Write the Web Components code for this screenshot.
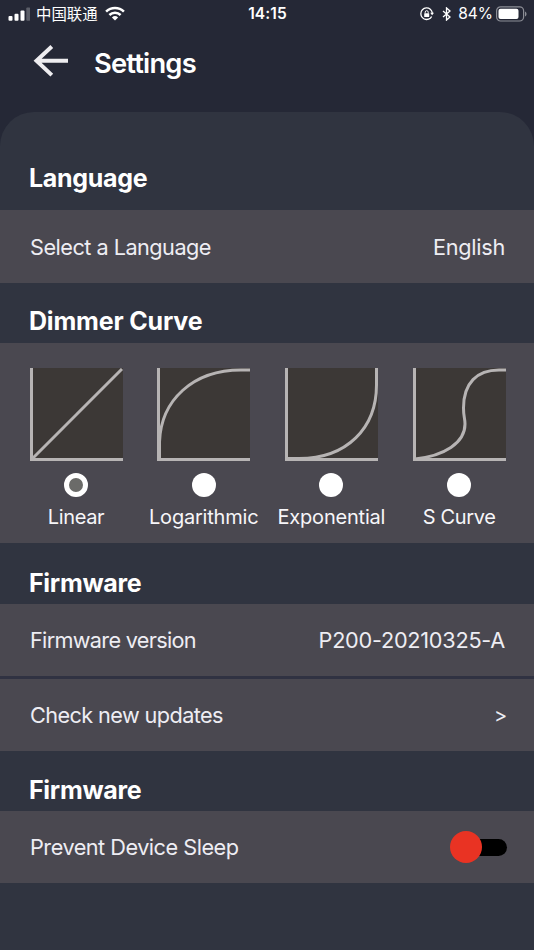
<!DOCTYPE html>
<html lang="en">
<head>
<meta charset="utf-8">
<title>Settings</title>
<style>
html,body{margin:0;height:100%;background:#252836;overflow:hidden}
body{font-family:Inter,"Noto Sans CJK SC",sans-serif;color:#fff}
</style>
</head>
<body>
<settings-app></settings-app>
<script>
function define(name, html) {
  const t = document.createElement('template');
  t.innerHTML = html;
  customElements.define(name, class extends HTMLElement {
    constructor() {
      super();
      this.attachShadow({mode: 'open'}).append(t.content.cloneNode(true));
    }
  });
}

define('status-bar', `
<style>
:host{display:grid;grid-template-columns:1fr auto 1fr;align-items:center;height:27px;box-sizing:border-box;padding:0 7px 0 8px;white-space:nowrap}
div{display:flex;align-items:center}
svg{display:block;flex:none}
.carrier{font:400 15.4px/27px "Noto Sans CJK SC",sans-serif;margin:0 7px 0 6px}
time{font-size:15.5px;font-weight:600;letter-spacing:.1px}
.right{justify-content:flex-end}
.pct{font-size:15.5px;letter-spacing:0;margin:0 3px 0 7px}
</style>
<div><svg width="22" height="16" viewBox="0 0 22 16" fill="#fff"><rect x=".5" y="10" width="4" height="4.8" rx="1"/><rect x="6.5" y="7.8" width="4" height="7" rx="1"/><rect x="12.5" y="4.5" width="4" height="10.3" rx="1"/><rect x="18.3" y="1.5" width="4" height="13.3" rx="1" opacity=".25"/></svg>
<span class="carrier">中国联通</span>
<svg width="20" height="15" viewBox="0 0 20 15" fill="none" stroke="#fff" stroke-width="2.5"><path d="M1.1 5.6a12.6 12.6 0 0 1 17.8 0M4.4 9a8 8 0 0 1 11.2 0"/><path d="M10 14.6l-3.1-3.1a4.5 4.5 0 0 1 6.2 0z" fill="#fff" stroke="none"/></svg></div>
<time>14:15</time>
<div class="right"><svg width="14" height="14" viewBox="0 0 14 14"><path d="M10.3 2.2A5.8 5.8 0 1 0 10.3 11.2M10.3 2.2A5.8 5.8 0 0 1 12.3 6M10.3 11.2A5.8 5.8 0 0 0 11.6 9.4" fill="none" stroke="#fff" stroke-width="1.3"/><path d="M10.2 5.7h3.8l-1.9 2.6z" fill="#fff"/><rect x="4.2" y="6.2" width="5" height="3.9" rx=".6" fill="#fff"/><path d="M5.2 6.4V5.2a1.5 1.5 0 0 1 3 0v1.2" fill="none" stroke="#fff"/></svg>
<svg style="margin-left:8px" width="9" height="14" viewBox="0 0 9 14"><path d="M1 4l7 6-3.5 3.1V.9L8 4l-7 6" fill="none" stroke="#fff" stroke-width="1.3"/></svg>
<span class="pct">84%</span>
<svg width="31" height="16" viewBox="0 0 31 16"><rect x=".6" y=".8" width="27" height="14.2" rx="4" fill="none" stroke="#8c8e96" stroke-width="1.2"/><rect x="2.5" y="2.7" width="20" height="10.4" rx="2" fill="#fff"/><path d="M29 5.5v5c2-.8 2-4.2 0-5z" fill="#8c8e96"/></svg></div>`);

define('app-header', `
<style>
:host{display:flex;height:85px;box-sizing:border-box;padding:16px 0 0 33px}
svg{display:block;margin-right:26px}
h1{margin:0;font-size:27.3px;line-height:42px;font-weight:600;letter-spacing:-.8px}
</style>
<svg width="35" height="36" viewBox="0 0 35 36" fill="none" stroke="#eeedf0" stroke-width="4"><path d="M18.8 3.5L3.5 17.8l15.3 14.3M3.5 17.8H35"/></svg>
<h1><slot></slot></h1>`);

define('settings-panel', `
<style>:host{display:block;flex:1;background:#303440;border-radius:34px 34px 0 0;overflow:hidden}</style>
<slot></slot>`);

define('settings-section', `
<style>
:host{display:block}
h2{margin:0;height:var(--head,60px);box-sizing:border-box;padding:var(--pad,22px) 29px 0;font-size:25px;line-height:32px;font-weight:700;letter-spacing:var(--title-ls,-.3px);white-space:nowrap}
div{display:grid;gap:3px;background:#303242}
</style>
<h2><slot name="title"></slot></h2><div><slot></slot></div>`);

define('settings-row', `
<style>
:host{display:flex;justify-content:space-between;align-items:center;height:var(--h,72px);box-sizing:border-box;padding:0 29px 0 30px;background:#4a4850;color:#eeedf3;font-size:21.7px;font-weight:400;letter-spacing:var(--ls,-.5px);white-space:nowrap}
.v{letter-spacing:-.26px;display:flex}
</style>
<span><slot></slot></span><span class="v"><slot name="value"></slot></span>`);

define('curve-picker', `
<style>:host{display:grid;grid-template-columns:repeat(4,127.7px);height:200px;box-sizing:border-box;padding:25px 0 0 12.2px;background:#4a4850}</style>
<slot></slot>`);

const curves = {
  linear: 'M2 91L92 1',
  log: 'M2.5 91V74C4 32 36 2 84 2H93',
  exp: 'M2 90.5H14C62 90.5 91.5 60 91.5 17V0',
  s: 'M2 91C31 88 52 75 52 56C52 50 50.5 49 50.5 40C50.5 15 64 2 86 2H93'
};
customElements.define('curve-option', class extends HTMLElement {
  constructor() {
    super();
    this.attachShadow({mode: 'open'});
  }
  connectedCallback() {
    this.shadowRoot.innerHTML = `
<style>
:host{display:flex;flex-direction:column;align-items:center;font-size:20px;line-height:24px;letter-spacing:var(--ls,-.2px);white-space:nowrap;color:#f7f6f9}
svg{display:block}
i{width:24px;height:24px;margin:12px 0 8px;border-radius:50%;background:#fff;box-sizing:border-box}
:host([checked]) i{background:#6b6b69;border:5.5px solid #fff}
</style>
<svg width="93" height="93" viewBox="0 0 93 93"><rect width="93" height="93" fill="#3c3836"/><g fill="none" stroke="#b7b4b4" stroke-width="3"><path d="M1.5 0V91.5H93"/><path d="${curves[this.getAttribute('curve')]}"/></g></svg>
<i></i><span><slot></slot></span>`;
  }
});

define('toggle-switch', `
<style>
:host{display:flex;align-items:center;width:57px;height:33px;margin-right:-2px}
i{width:32.4px;height:32.4px;border-radius:50%;background:#e93323;position:relative}
b{width:38px;height:17px;border-radius:9px;background:#000;margin-left:-13.4px}
</style>
<i></i><b></b>`);

define('settings-app', `
<style>:host{display:flex;flex-direction:column;width:534px;height:950px}
.arrow{font-size:20px;margin-right:-2px}</style>
<status-bar></status-bar>
<app-header>Settings</app-header>
<settings-panel>
<settings-section style="--head:98px;--pad:50px"><span slot="title">Language</span>
<settings-row style="--h:73px;--ls:-.52px">Select a Language<span slot="value">English</span></settings-row></settings-section>
<settings-section style="--title-ls:-.18px"><span slot="title">Dimmer Curve</span>
<curve-picker><curve-option curve="linear" style="--ls:-.35px" checked>Linear</curve-option><curve-option curve="log">Logarithmic</curve-option><curve-option curve="exp">Exponential</curve-option><curve-option curve="s" style="--ls:-.35px">S Curve</curve-option></curve-picker></settings-section>
<settings-section style="--head:61px;--pad:24px"><span slot="title">Firmware</span>
<settings-row style="--ls:-.7px">Firmware version<span slot="value">P200-20210325-A</span></settings-row>
<settings-row style="--ls:-.6px">Check new updates<span slot="value" class="arrow">&gt;</span></settings-row></settings-section>
<settings-section style="--pad:23px"><span slot="title">Firmware</span>
<settings-row>Prevent Device Sleep<toggle-switch slot="value"></toggle-switch></settings-row></settings-section>
</settings-panel>`);
</script>
</body>
</html>
